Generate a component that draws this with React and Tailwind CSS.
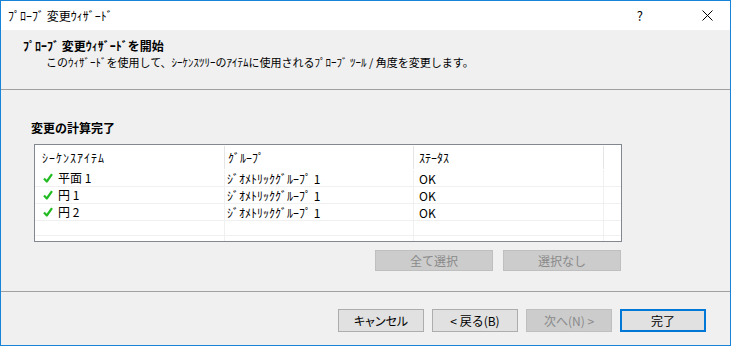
import React from "react";

const rows = [
  { name: "平面 1", group: "ｼﾞｵﾒﾄﾘｯｸｸﾞﾙｰﾌﾟ 1", status: "OK" },
  { name: "円 1", group: "ｼﾞｵﾒﾄﾘｯｸｸﾞﾙｰﾌﾟ 1", status: "OK" },
  { name: "円 2", group: "ｼﾞｵﾒﾄﾘｯｸｸﾞﾙｰﾌﾟ 1", status: "OK" },
];

function Check() {
  return (
    <svg width="10" height="10" viewBox="0 0 10 10" className="mr-[5px] shrink-0">
      <path d="M1 5.5 L3.8 8.5 L9 1.2" fill="none" stroke="#22bb22" strokeWidth="2.2" strokeLinejoin="round" />
    </svg>
  );
}

function Btn({ children, disabled, primary, className = "" }) {
  const base = "flex items-center justify-center text-[12px]";
  if (disabled) return <div className={`${base} border border-[#bfbfbf] bg-[#cccccc] text-[#8a8a8a] ${className}`}>{children}</div>;
  if (primary) return <div className={`${base} border-2 border-[#0078d7] bg-[#e1e1e1] text-black ${className}`}>{children}</div>;
  return <div className={`${base} border border-[#adadad] bg-[#e1e1e1] text-black ${className}`}>{children}</div>;
}

export default function App() {
  return (
    <div
      className="flex h-[346px] w-[731px] flex-col border border-[#1883d7] bg-[#f0f0f0] text-black"
      style={{ fontFamily: '"Noto Sans CJK JP", "Noto Sans", sans-serif' }}
    >
      {/* title bar */}
      <div className="flex h-[29px] shrink-0 items-center bg-white pl-[7px] text-[12px]">
        <span>ﾌﾟﾛｰﾌﾞ 変更ｳｨｻﾞｰﾄﾞ</span>
        <span className="ml-auto mr-[59px] text-[13px]">?</span>
        <svg width="11" height="11" viewBox="0 0 11 11" className="mr-[17px]">
          <path d="M0.5 0.5 L10.5 10.5 M10.5 0.5 L0.5 10.5" stroke="#000" strokeWidth="1" />
        </svg>
      </div>

      {/* header */}
      <div className="h-[60px] shrink-0 border-b border-[#a0a0a0] pl-[22px] pt-[8px] leading-[16px]">
        <div className="text-[12px] font-bold">ﾌﾟﾛｰﾌﾞ 変更ｳｨｻﾞｰﾄﾞを開始</div>
        <div className="pl-[23px] text-[11px]">このｳｨｻﾞｰﾄﾞを使用して、ｼｰｹﾝｽﾂﾘｰのｱｲﾃﾑに使用されるﾌﾟﾛｰﾌﾞ ﾂｰﾙ / 角度を変更します。</div>
      </div>

      {/* body */}
      <div className="h-[202px] shrink-0 border-b border-[#a0a0a0] pl-[33px] pt-[30px]">
        <div className="-ml-[3px] text-[12px] font-bold leading-[16px]">変更の計算完了</div>
        <div className="mt-[8px] h-[98px] w-[588px] border border-[#828790] bg-white text-[12px]">
          <div className="grid h-[25px] grid-cols-[190px_189px_190px_1fr] items-center">
            <div className="flex h-[23px] items-center border-r border-[#e5e5e5] pl-[7px] tracking-[1px]">ｼｰｹﾝｽｱｲﾃﾑ</div>
            <div className="flex h-[23px] items-center border-r border-[#e5e5e5] pl-[3px]">ｸﾞﾙｰﾌﾟ</div>
            <div className="flex h-[23px] items-center border-r border-[#e5e5e5] pl-[5px]">ｽﾃｰﾀｽ</div>
            <div />
          </div>
          {rows.map((r) => (
            <div key={r.name} className="grid h-[17px] grid-cols-[190px_189px_190px_1fr] border-b border-[#f0f0f0] leading-[15px]">
              <div className="flex items-center border-r border-[#f0f0f0] pl-[8px]">
                <Check />
                <span className="text-[12px] leading-[14px]">{r.name}</span>
              </div>
              <div className="flex items-center border-r border-[#f0f0f0] pl-[2px]">{r.group}</div>
              <div className="flex items-center border-r border-[#f0f0f0] pl-[5px]">{r.status}</div>
              <div />
            </div>
          ))}
          <div className="grid h-[15px] grid-cols-[190px_189px_190px_1fr] border-b border-[#f0f0f0]">
            <div className="border-r border-[#f0f0f0]" />
            <div className="border-r border-[#f0f0f0]" />
            <div className="border-r border-[#f0f0f0]" />
            <div />
          </div>
          <div className="grid h-[5px] grid-cols-[190px_189px_190px_1fr]">
            <div className="border-r border-[#f0f0f0]" />
            <div className="border-r border-[#f0f0f0]" />
            <div className="border-r border-[#f0f0f0]" />
            <div />
          </div>
        </div>
        <div className="mt-[8px] flex w-[588px] justify-end gap-[10px] pr-[1px]">
          <Btn disabled className="h-[21px] w-[118px]">全て選択</Btn>
          <Btn disabled className="h-[21px] w-[118px]">選択なし</Btn>
        </div>
      </div>

      {/* footer */}
      <div className="flex justify-end gap-[8px] pr-[24px] pt-[17px]">
        <Btn className="h-[23px] w-[86px] [font-feature-settings:'palt']">キャンセル</Btn>
        <Btn className="h-[23px] w-[86px]">&lt; 戻る(B)</Btn>
        <Btn disabled className="h-[23px] w-[86px]">次へ(N) &gt;</Btn>
        <Btn primary className="h-[23px] w-[86px]">完了</Btn>
      </div>
    </div>
  );
}
